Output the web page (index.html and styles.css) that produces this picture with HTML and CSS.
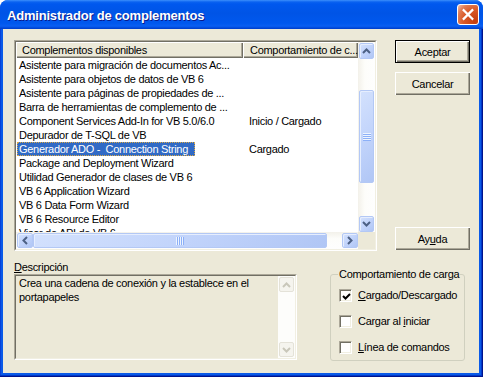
FILE: index.html
```html
<!DOCTYPE html>
<html lang="es">
<head>
<meta charset="utf-8">
<title>Administrador de complementos</title>
<link rel="stylesheet" href="styles.css">
</head>
<body>
<div class="window">
  <div class="titlebar">
    <span class="title">Administrador de complementos</span>
    <button class="close" aria-label="Cerrar"><svg width="21" height="21" viewBox="0 0 21 21"><path d="M6 6 L15 15 M15 6 L6 15" stroke="#fff" stroke-width="2.4" stroke-linecap="square" fill="none"/></svg></button>
  </div>
  <div class="frame">
    <div class="client">
      <div class="top">
        <div class="listbox">
          <div class="lv">
            <div class="lv-view">
              <div class="lv-header">
                <div class="hcell c1">Complementos disponibles</div>
                <div class="hcell c2">Comportamiento de c...</div>
              </div>
              <div class="row"><div class="cell c1"><span class="txt">Asistente para migración de documentos Ac...</span></div><div class="cell c2"></div></div>
              <div class="row"><div class="cell c1"><span class="txt">Asistente para objetos de datos de VB 6</span></div><div class="cell c2"></div></div>
              <div class="row"><div class="cell c1"><span class="txt">Asistente para páginas de propiedades de ...</span></div><div class="cell c2"></div></div>
              <div class="row"><div class="cell c1"><span class="txt">Barra de herramientas de complemento de ...</span></div><div class="cell c2"></div></div>
              <div class="row"><div class="cell c1"><span class="txt">Component Services Add-In for VB 5.0/6.0</span></div><div class="cell c2">Inicio / Cargado</div></div>
              <div class="row"><div class="cell c1"><span class="txt">Depurador de T-SQL de VB</span></div><div class="cell c2"></div></div>
              <div class="row"><div class="cell c1"><span class="txt selected">Generador ADO -&nbsp; Connection String</span></div><div class="cell c2">Cargado</div></div>
              <div class="row"><div class="cell c1"><span class="txt">Package and Deployment Wizard</span></div><div class="cell c2"></div></div>
              <div class="row"><div class="cell c1"><span class="txt">Utilidad Generador de clases de VB 6</span></div><div class="cell c2"></div></div>
              <div class="row"><div class="cell c1"><span class="txt">VB 6 Application Wizard</span></div><div class="cell c2"></div></div>
              <div class="row"><div class="cell c1"><span class="txt">VB 6 Data Form Wizard</span></div><div class="cell c2"></div></div>
              <div class="row"><div class="cell c1"><span class="txt">VB 6 Resource Editor</span></div><div class="cell c2"></div></div>
              <div class="row"><div class="cell c1"><span class="txt">Visor de API de VB 6</span></div><div class="cell c2"></div></div>
            </div>
            <div class="vscroll">
              <div class="sb-btn v-up"><svg width="9" height="6" viewBox="0 0 9 6"><path d="M1 5 L4.5 1.5 L8 5" stroke="#4d6185" stroke-width="2" fill="none"/></svg></div>
              <div class="v-track"><div class="sb-btn v-thumb"><span class="grip-h"></span></div></div>
              <div class="sb-btn v-down"><svg width="9" height="6" viewBox="0 0 9 6"><path d="M1 1 L4.5 4.5 L8 1" stroke="#4d6185" stroke-width="2" fill="none"/></svg></div>
            </div>
            <div class="hscroll">
              <div class="sb-btn h-left"><svg width="6" height="9" viewBox="0 0 6 9"><path d="M5 1 L1.5 4.5 L5 8" stroke="#4d6185" stroke-width="2" fill="none"/></svg></div>
              <div class="sb-btn h-thumb"><span class="grip-v"></span></div>
              <div class="h-track"></div>
              <div class="sb-btn h-right"><svg width="6" height="9" viewBox="0 0 6 9"><path d="M1 1 L4.5 4.5 L1 8" stroke="#4d6185" stroke-width="2" fill="none"/></svg></div>
            </div>
            <div class="corner"></div>
          </div>
        </div>
        <div class="buttons">
          <button class="btn default">Aceptar</button>
          <button class="btn cancel">Cancelar</button>
          <button class="btn help">Ay<u>u</u>da</button>
        </div>
      </div>
      <div class="bottom">
        <div class="desc">
          <div class="desc-label"><u>D</u>escripción</div>
          <div class="desc-box">
            <div class="desc-inner">
              <div class="desc-text">Crea una cadena de conexión y la establece en el portapapeles</div>
              <div class="dscroll">
                <div class="dis-btn"><svg width="9" height="6" viewBox="0 0 9 6"><path d="M1 5 L4.5 1.5 L8 5" stroke="#c9c7ba" stroke-width="2" fill="none"/></svg></div>
                <div class="dis-btn"><svg width="9" height="6" viewBox="0 0 9 6"><path d="M1 1 L4.5 4.5 L8 1" stroke="#c9c7ba" stroke-width="2" fill="none"/></svg></div>
              </div>
            </div>
          </div>
        </div>
        <fieldset class="group">
          <legend>Comportamiento de carga</legend>
          <label class="check"><span class="box"><svg width="9" height="9" viewBox="0 0 9 9"><path d="M1 4 L3.5 6.5 L8 2" stroke="#000" stroke-width="2" fill="none"/></svg></span><span><u>C</u>argado/Descargado</span></label>
          <label class="check"><span class="box"></span><span>Cargar al <u>i</u>niciar</span></label>
          <label class="check"><span class="box"></span><span><u>L</u>ínea de comandos</span></label>
        </fieldset>
      </div>
    </div>
  </div>
</div>
</body>
</html>
```

FILE: styles.css
```css
* { box-sizing: border-box; }
html, body { margin: 0; padding: 0; background: #ffffff; }
body {
  font-family: "Liberation Sans", Arial, sans-serif;
  font-size: 11px;
  letter-spacing: -0.3px;
  color: #000;
}
.window {
  width: 483px;
  height: 377px;
  display: flex;
  flex-direction: column;
  border-radius: 8px 8px 0 0;
  overflow: hidden;
  background: #0058e6;
}
.titlebar {
  height: 29px;
  flex: none;
  display: flex;
  align-items: center;
  justify-content: space-between;
  padding: 0 4px 0 7px;
  background: linear-gradient(180deg, #3c8ffb 0, #0a62f0 2px, #0058ee 4px, #0054e6 45%, #0058ee 80%, #0a5ff2 90%, #0046d6 97%, #003dc8 100%);
}
.title {
  color: #fff;
  font-family: "Liberation Sans", Arial, sans-serif;
  font-weight: bold;
  font-size: 13px;
  letter-spacing: -0.2px;
  text-shadow: 1px 1px #0a1a8a;
  padding-top: 2px;
}
.close {
  width: 22px;
  height: 21px;
  padding: 0;
  margin: 0;
  border: 1px solid #fff;
  border-radius: 3px;
  display: flex;
  align-items: center;
  justify-content: center;
  background: radial-gradient(circle at 85% 85%, #c33d10 0, #d95a28 50%, #e07a52 75%, #f2b49a 95%);
}
.frame {
  flex: 1;
  display: flex;
  padding: 0 4px 4px 3px;
  background: #0a5ae8;
  box-shadow: inset -1px -1px #00138c, inset -2px -2px #0038c8, inset 1px 0 #0842d8;
}
.client {
  flex: 1;
  background: #ece9d8;
  padding: 11px 0 0 11px;
  display: flex;
  flex-direction: column;
}
.top {
  display: flex;
  height: 211px;
}
.listbox {
  width: 363px;
  height: 211px;
  border: 1px solid;
  border-color: #aca899 #ffffff #ffffff #aca899;
}
.lv {
  width: 100%;
  height: 100%;
  border: 1px solid;
  border-color: #716f64 #f1efe2 #f1efe2 #716f64;
  display: grid;
  grid-template-columns: 1fr 17px;
  grid-template-rows: 1fr 17px;
  background: #fff;
}
.lv-view {
  overflow: hidden;
  background: #fff;
}
.lv-header {
  display: flex;
  height: 16px;
  background: #ece9d8;
}
.hcell {
  line-height: 16px;
  white-space: nowrap;
  overflow: hidden;
  box-shadow: inset 1px 1px #ffffff, inset -1px -1px #716f64, inset -2px -2px #aca899;
}
.hcell.c1 { width: 227px; padding-left: 6px; }
.hcell.c2 { flex: 1; padding-left: 7px; }
.row {
  display: flex;
  height: 14px;
  line-height: 14px;
  white-space: nowrap;
}
.cell { overflow: hidden; }
.cell.c1 { width: 227px; flex: none; padding-left: 1px; }
.cell.c2 { flex: 1; padding-left: 6px; }
.txt {
  display: inline-block;
  height: 14px;
  line-height: 12px;
  border: 1px solid transparent;
  padding: 0 1px 0 1px;
}
.txt.selected {
  background: #316ac5;
  color: #fff;
  border: 1px dotted #d8a848;
  padding-right: 6px;
}
.vscroll {
  display: flex;
  flex-direction: column;
  background: linear-gradient(90deg, #f3f1ea, #fdfdfa 40%, #fefefe);
}
.hscroll {
  display: flex;
  align-items: center;
  background: linear-gradient(180deg, #f3f1ea, #fdfdfa 40%, #fefefe);
}
.corner { background: #ece9d8; }
.sb-btn {
  border: 1px solid #b3c8f5;
  border-radius: 2px;
  background: linear-gradient(135deg, #d3e1fd 0, #c2d4fb 50%, #b0c6f5 100%);
  display: flex;
  align-items: center;
  justify-content: center;
  box-shadow: inset 1px 1px #e6eefe;
}
.v-up { height: 16px; margin: 1px 1px 0 1px; }
.v-track { flex: 1; padding: 31px 1px 0 1px; }
.v-thumb { height: 93px; }
.v-down { height: 16px; margin: 0 1px 0 1px; }
.h-left { width: 16px; height: 15px; margin-left: 1px; }
.h-thumb { width: 294px; height: 15px; }
.h-track { width: 15px; }
.h-right { width: 16px; height: 15px; }
.grip-h {
  width: 8px;
  height: 8px;
  background: repeating-linear-gradient(180deg, #eef4fe 0, #eef4fe 1px, #8cb0f8 1px, #8cb0f8 2px);
}
.grip-v {
  width: 8px;
  height: 8px;
  background: repeating-linear-gradient(90deg, #eef4fe 0, #eef4fe 1px, #8cb0f8 1px, #8cb0f8 2px);
}
.buttons {
  width: 75px;
  margin-left: 18px;
  display: flex;
  flex-direction: column;
}
.btn {
  height: 23px;
  padding: 0;
  margin: 0;
  font-family: "Liberation Sans", Arial, sans-serif;
  font-size: 11px;
  letter-spacing: -0.3px;
  color: #000;
  background: #ece9d8;
  border: none;
  box-shadow: inset 1px 1px #ffffff, inset -1px -1px #716f64, inset -2px -2px #aca899;
}
.btn.default {
  border: 1px solid #000;
}
.btn.cancel { margin-top: 9px; }
.btn.help { margin-top: auto; margin-bottom: 1px; }
.bottom {
  display: flex;
  margin-top: 10px;
}
.desc { width: 283px; }
.desc-label {
  height: 13px;
  line-height: 13px;
}
.desc-box {
  height: 86px;
  border: 1px solid;
  border-color: #aca899 #ffffff #ffffff #aca899;
}
.desc-inner {
  height: 100%;
  display: flex;
  border: 1px solid;
  border-color: #716f64 #f1efe2 #f1efe2 #716f64;
  background: #ece9d8;
}
.desc-text {
  flex: 1;
  padding: 0 4px 0 3px;
  line-height: 14px;
}
.dscroll {
  width: 17px;
  display: flex;
  flex-direction: column;
  justify-content: space-between;
  background: #fdfdfb;
  padding: 1px;
}
.dis-btn {
  height: 15px;
  border: 1px solid #e4e2d8;
  border-radius: 2px;
  background: #f5f4ee;
  display: flex;
  align-items: center;
  justify-content: center;
}
.group {
  margin: 7px 0 0 33px;
  width: 135px;
  padding: 8px 0 6px 8px;
  border: 1px solid #d0d0bf;
  border-radius: 3px;
  display: flex;
  flex-direction: column;
  gap: 13px;
  min-width: 0;
}
.group legend {
  padding: 0 1px;
  margin-left: -1px;
  line-height: 13px;
  white-space: nowrap;
}
.check {
  display: flex;
  align-items: center;
  height: 13px;
  line-height: 13px;
  white-space: nowrap;
}
.box {
  width: 13px;
  height: 13px;
  flex: none;
  margin-right: 6px;
  border: 1px solid;
  border-color: #aca899 #ffffff #ffffff #aca899;
  box-shadow: inset 1px 1px #716f64, inset -1px -1px #f1efe2;
  background: #ffffff;
  display: flex;
  align-items: center;
  justify-content: center;
}
.box svg { margin-left: 1px; margin-top: 1px; }
```
